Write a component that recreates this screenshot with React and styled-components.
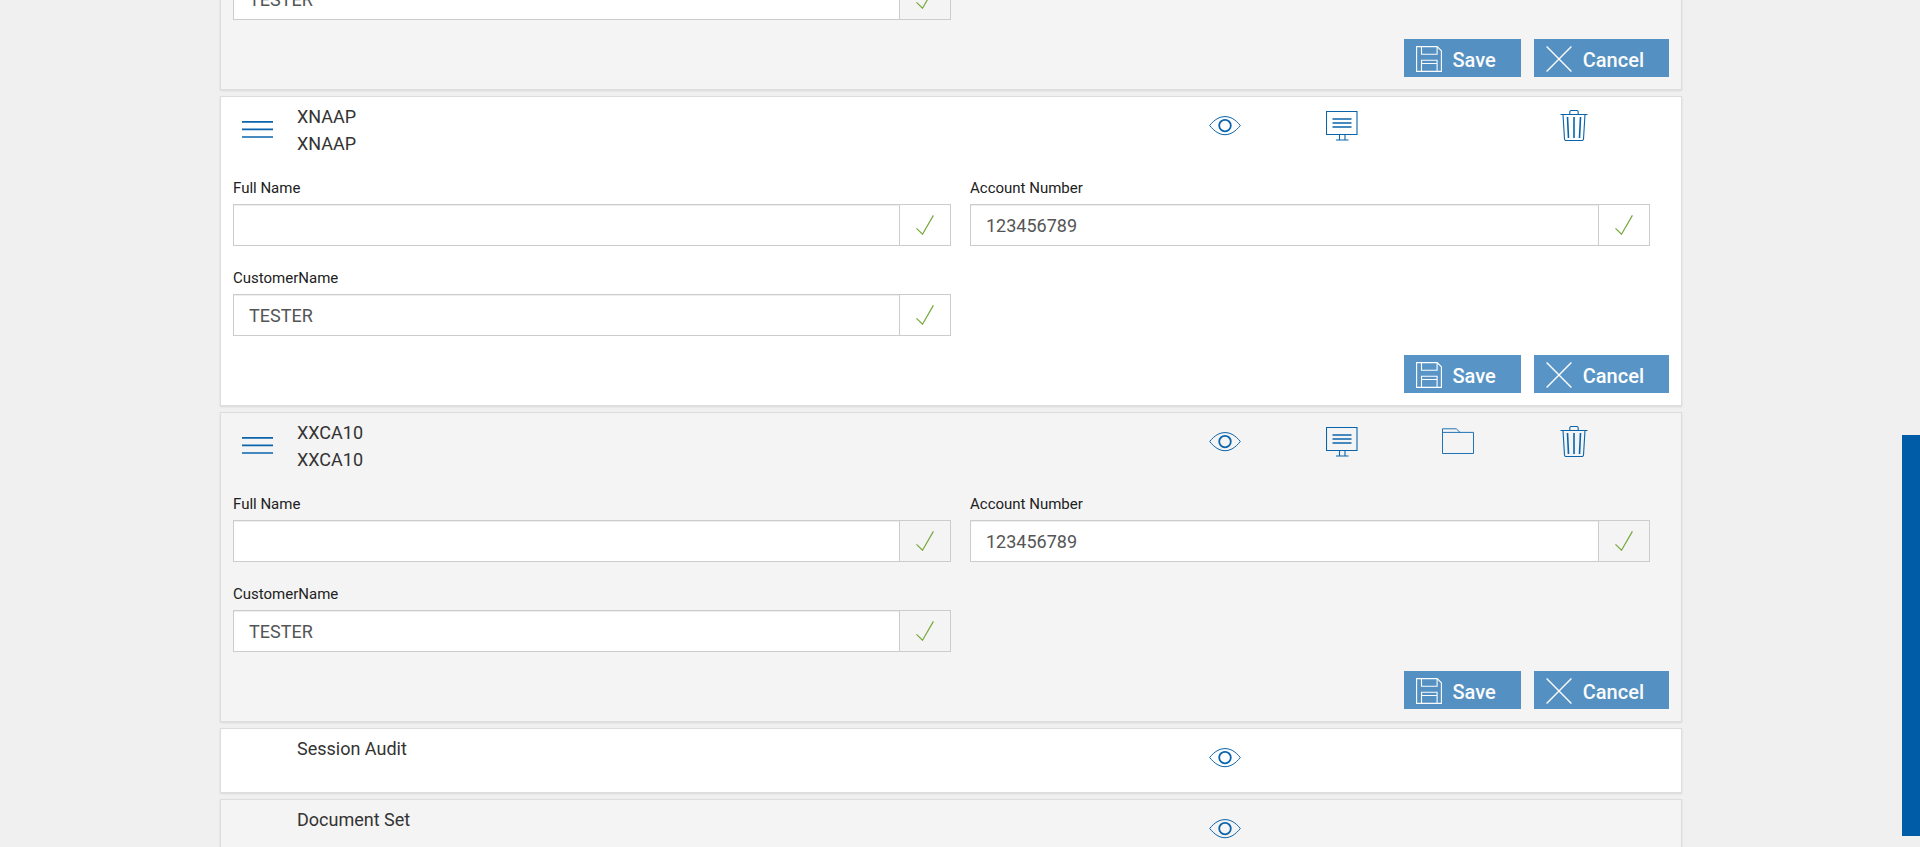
import React, { useId } from "react";
import styled, { createGlobalStyle } from "styled-components";

const GlobalStyle = createGlobalStyle`
  *, *::before, *::after { box-sizing: border-box; }
  body {
    margin: 0;
    background: #f0f0f0;
    color: #333;
    font-family: Roboto, "Liberation Sans", sans-serif;
    font-size: 18px;
    line-height: 27px;
  }
`;

const Page = styled.div`
  display: flex;
  height: 100vh;
  overflow: hidden;
`;

const Main = styled.main`
  flex: 1;
  min-width: 0;
  padding: 0 220px;
  overflow: hidden;
`;

const ScrollTrack = styled.div`
  display: flex;
  flex: none;
  width: 18px;
  padding: 435px 0 11px;
`;

const ScrollThumb = styled.div`
  flex: 1;
  background: #005ca6;
`;

const List = styled.div`
  display: flex;
  flex-direction: column;
  gap: 6px;
  margin-top: -23px;
`;

const Card = styled.section`
  border: 1px solid #ddd;
  background: ${(p) => (p.$shaded ? "#f4f4f4" : "#fff")};
  box-shadow: 0 1px 2px rgba(0, 0, 0, 0.1);
`;

const CardHeader = styled.header`
  display: flex;
  align-items: flex-start;
  min-height: 63px;
  padding-right: 49px;
`;

const HandleCell = styled.div`
  flex: none;
  width: 76px;
  padding: 24px 0 0 21px;
`;

const IconButton = styled.button`
  display: flex;
  padding: 0;
  border: 0;
  background: none;
  color: #0a64ab;
  cursor: pointer;
`;

const Titles = styled.div`
  flex: 1;
  padding-top: 6px;
`;

const Title = styled.div``;

const Actions = styled.div`
  display: grid;
  grid-template-columns: repeat(4, 116px);
`;

const ActionCell = styled.div`
  display: flex;
  align-items: center;
  justify-content: center;
  height: 57px;
`;

const Form = styled.form`
  padding: ${(p) => (p.$flush ? "0" : "18px")} 0 12px 12px;
`;

const Fields = styled.div`
  display: grid;
  grid-template-columns: minmax(0, 718fr) minmax(0, 680fr);
  gap: 22px 19px;
  padding-right: 31px;
`;

const Label = styled.label`
  display: block;
  margin-bottom: 6px;
  color: #212121;
  font-size: 15px;
  line-height: 20px;
`;

const InputGroup = styled.div`
  display: flex;
  height: 42px;
  border: 1px solid #ccc;
`;

const TextInput = styled.input`
  flex: 1;
  min-width: 0;
  padding: 1px 15px 0;
  border: 0;
  border-radius: 0;
  outline: 0;
  background: #fff;
  box-shadow: inset 0 1px 1px rgba(0, 0, 0, 0.075);
  color: #555;
  font: inherit;
`;

const Addon = styled.span`
  display: flex;
  align-items: center;
  justify-content: center;
  width: 51px;
  border-left: 1px solid #ccc;
`;

const FormActions = styled.div`
  display: flex;
  justify-content: flex-end;
  gap: 13px;
  padding: 19px 12px 0 0;
`;

const ActionButton = styled.button`
  display: flex;
  align-items: center;
  gap: 11px;
  height: 38px;
  padding: 2px 25px 0 12px;
  border: 0;
  background: #005da8;
  color: #fff;
  font: 500 20px/28px Roboto, "Liberation Sans", sans-serif;
  opacity: 0.65;
`;

const ButtonText = styled.span`
  padding-top: 2px;
`;

const Svg = styled.svg`
  display: block;
  flex: none;
  fill: none;
  stroke: currentColor;
`;

const CheckSvg = styled(Svg)`
  color: #76a83c;
`;

const MenuIcon = () => (
  <Svg width="31" height="17" strokeWidth="1.7" aria-hidden="true">
    <path d="M0 .9h31M0 8.4h31M0 16h31" />
  </Svg>
);

const EyeIcon = () => (
  <Svg width="34" height="20" aria-hidden="true">
    <path d="M.7 9.500C5.500 3.500 10.500.6 16 .6S26.500 3.500 31.300 9.500C26.500 15.500 21.500 18.700 16 18.700S5.500 15.500.7 9.500z" strokeWidth="1" />
    <circle cx="16" cy="9.600" r="5.800" strokeWidth="1.800" />
  </Svg>
);

const MonitorIcon = () => (
  <Svg width="32" height="30" aria-hidden="true">
    <path d="M.5.5h30.500v23H.5zM13.500 23.500v5.500M19 23.500v5.500M10 29h12.500" strokeWidth="1.100" />
    <path d="M6.500 8h19M6.500 12h19M6.500 16h19" strokeWidth="1.600" />
  </Svg>
);

const FolderIcon = () => (
  <Svg width="32" height="27" strokeWidth=".9" aria-hidden="true">
    <path d="M.5 25.500V.8h13.800l3.700 3.600h13.500v21.100zM.5 4.400H18" />
  </Svg>
);

const TrashIcon = () => (
  <Svg width="28" height="31" aria-hidden="true">
    <path d="M.5 4.500h27M9.800 4.500V2q0-1.500 1.500-1.500h5.400q1.500 0 1.500 1.500v2.500M3 4.500l1.500 24.500q.1 1.500 1.500 1.500h16q1.400 0 1.500-1.500L25 4.500" strokeWidth="1.100" />
    <path d="M7.500 7l1 21M14 7v21M20.500 7l-1 21" strokeWidth="1.600" />
  </Svg>
);

const CheckIcon = () => (
  <CheckSvg width="18" height="20" strokeWidth="1.200" aria-hidden="true">
    <path d="M.5 13.400l6 5.800L17.400.4" />
  </CheckSvg>
);

const SaveIcon = () => (
  <Svg width="26" height="26" strokeWidth="1.100" aria-hidden="true">
    <path d="M.6.6h20.600l4.200 4.200v20.600H.6zM5.500.6v7.700h15.600V.6M5.500 25.400V14.300h15.600v11.100M5.500 17.500h15.600" />
  </Svg>
);

const CancelIcon = () => (
  <Svg width="26" height="26" strokeWidth="1.400" aria-hidden="true">
    <path d="M.6.6l24.800 24.800M25.400.6L.6 25.400" />
  </Svg>
);

const actionIcons = [
  ["View", EyeIcon],
  ["Display", MonitorIcon],
  ["Folder", FolderIcon],
  ["Delete", TrashIcon],
];

function Header({ titles, actions, draggable }) {
  return (
    <CardHeader>
      <HandleCell>
        {draggable && (
          <IconButton type="button" aria-label="Reorder">
            <MenuIcon />
          </IconButton>
        )}
      </HandleCell>
      <Titles>
        {titles.map((title, i) => (
          <Title key={i}>{title}</Title>
        ))}
      </Titles>
      <Actions>
        {actionIcons.map(([name, Icon]) => (
          <ActionCell key={name}>
            {actions.includes(name) && (
              <IconButton type="button" aria-label={name}>
                <Icon />
              </IconButton>
            )}
          </ActionCell>
        ))}
      </Actions>
    </CardHeader>
  );
}

function Field({ label, value, hideLabel }) {
  const id = useId();
  return (
    <div>
      {!hideLabel && <Label htmlFor={id}>{label}</Label>}
      <InputGroup>
        <TextInput id={id} type="text" defaultValue={value} aria-label={hideLabel ? label : undefined} />
        <Addon>
          <CheckIcon />
        </Addon>
      </InputGroup>
    </div>
  );
}

function Buttons() {
  return (
    <FormActions>
      <ActionButton type="button" disabled>
        <SaveIcon />
        <ButtonText>Save</ButtonText>
      </ActionButton>
      <ActionButton type="button" disabled>
        <CancelIcon />
        <ButtonText>Cancel</ButtonText>
      </ActionButton>
    </FormActions>
  );
}

function DocumentCard({ name, actions, shaded }) {
  return (
    <Card $shaded={shaded}>
      <Header titles={[name, name]} actions={actions} draggable />
      <Form>
        <Fields>
          <Field label="Full Name" value="" />
          <Field label="Account Number" value="123456789" />
          <Field label="CustomerName" value="TESTER" />
        </Fields>
        <Buttons />
      </Form>
    </Card>
  );
}

export default function App() {
  return (
    <Page>
      <GlobalStyle />
      <Main>
        <List>
          <Card $shaded>
            <Form $flush>
              <Fields>
                <Field label="CustomerName" value="TESTER" hideLabel />
              </Fields>
              <Buttons />
            </Form>
          </Card>
          <DocumentCard name="XNAAP" actions={["View", "Display", "Delete"]} />
          <DocumentCard name="XXCA10" actions={["View", "Display", "Folder", "Delete"]} shaded />
          <Card>
            <Header titles={["Session Audit"]} actions={["View"]} />
          </Card>
          <Card $shaded>
            <Header titles={["Document Set"]} actions={["View"]} />
          </Card>
        </List>
      </Main>
      <ScrollTrack>
        <ScrollThumb />
      </ScrollTrack>
    </Page>
  );
}
